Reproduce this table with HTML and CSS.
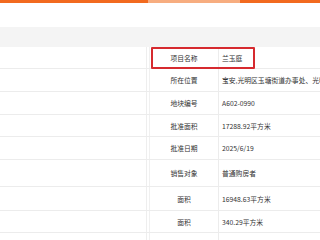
FILE: index.html
```html
<!DOCTYPE html>
<html lang="zh">
<head>
<meta charset="utf-8">
<link rel="stylesheet" href="styles.css">
</head>
<body>
<div class="topbar"><span class="nav-lead"></span><span class="nav-on"></span><span class="nav-rest"></span></div>
<div class="blank"></div>
<div class="thead"></div>
<div class="table">
  <div class="row h22"><div class="c1"></div><div class="c2">项目名称</div><div class="c3">兰玉庭</div></div>
  <div class="row h23"><div class="c1"></div><div class="c2">所在位置</div><div class="c3">宝安,光明区玉塘街道办事处、光明</div></div>
  <div class="row h23"><div class="c1"></div><div class="c2">地块编号</div><div class="c3">A602-0990</div></div>
  <div class="row h22"><div class="c1"></div><div class="c2">批准面积</div><div class="c3">17288.92平方米</div></div>
  <div class="row h23"><div class="c1"></div><div class="c2">批准日期</div><div class="c3">2025/6/19</div></div>
  <div class="row h27"><div class="c1"></div><div class="c2">销售对象</div><div class="c3">普通购房者</div></div>
  <div class="row h24"><div class="c1"></div><div class="c2">面积</div><div class="c3">16948.63平方米</div></div>
  <div class="row h22"><div class="c1"></div><div class="c2">面积</div><div class="c3">340.29平方米</div></div>
  <div class="row h7"><div class="c1"></div><div class="c2"></div><div class="c3"></div></div>
  <div class="mark"></div>
</div>
</body>
</html>
```
FILE: styles.css
```css
html, body {
  margin: 0;
  padding: 0;
  background: #fff;
  width: 320px;
  height: 240px;
  overflow: hidden;
  font-family: "Noto Sans CJK SC", "Noto Sans", sans-serif;
}
.topbar {
  display: flex;
  height: 3px;
  background: #f26a1f;
}
.nav-lead { width: 148px; }
.nav-on { width: 92px; background: #f7ad80; }
.nav-rest { flex: 1; }
.blank { height: 24px; }
.thead {
  height: 20px;
  background: #f4f4f4;
}
.table {
  position: relative;
}
.row {
  display: grid;
  grid-template-columns: 147px 72px 1fr;
  box-sizing: border-box;
  border-bottom: 1px solid #ececec;
  font-size: 6.8px;
  color: #333;
}
.h7 { height: 7px; border-bottom: none; }
.h22 { height: 22px; }
.h23 { height: 23px; }
.h24 { height: 24px; }
.h27 { height: 27px; }
.c1 {
  border-right: 1px solid #eeeeee;
}
.c2 {
  margin-left: 2px;
  border-left: 1px solid #f0f0f0;
  border-right: 1px solid #ececec;
  display: flex;
  align-items: center;
  justify-content: center;
  white-space: nowrap;
}
.c3 {
  display: flex;
  align-items: center;
  padding-left: 3px;
  white-space: nowrap;
  overflow: hidden;
}
.mark {
  position: absolute;
  left: 151px;
  top: 0;
  width: 104px;
  height: 22px;
  box-sizing: border-box;
  border: 2px solid #d62a2f;
  border-radius: 1px;
}
```
